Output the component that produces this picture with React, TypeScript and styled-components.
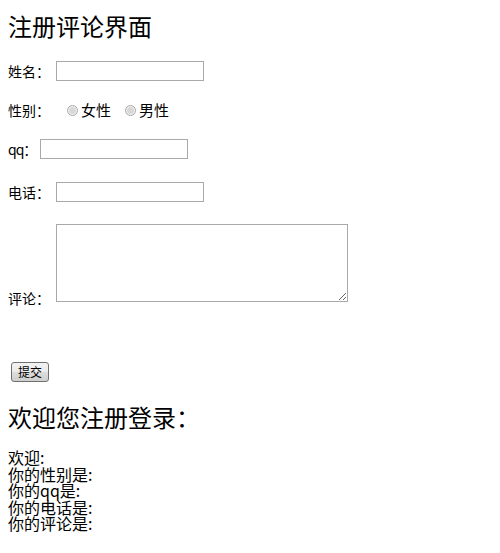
import React from "react";
import styled, { createGlobalStyle } from "styled-components";

const Global = createGlobalStyle`
  html, body { margin: 0; padding: 0; background: #fff; }
  body { font-family: "Noto Sans CJK SC", "Liberation Sans", sans-serif; color: #000; }
`;

const Page = styled.div`
  padding: 0 8px;
`;

const Heading = styled.h2<{ $top: number }>`
  margin: ${(p) => p.$top}px 0 0;
  font-size: 24px;
  line-height: 28px;
  font-weight: 400;
  letter-spacing: 0;
`;

const Form = styled.form`
  display: flex;
  flex-direction: column;
  margin: 0;
`;

const Row = styled.div<{ $top: number; $bottom?: boolean }>`
  display: flex;
  align-items: ${(p) => (p.$bottom ? "flex-end" : "center")};
  gap: 6px;
  margin-top: ${(p) => p.$top}px;
  min-height: 20px;
`;

const Label = styled.label<{ $drop?: number; $narrow?: boolean }>`
  font-size: 14px;
  line-height: 16px;
  white-space: nowrap;
  letter-spacing: ${(p) => (p.$narrow ? "-1px" : "0")};
  margin-bottom: ${(p) => -(p.$drop ?? 0)}px;
`;

const TextInput = styled.input<{ $shift?: number }>`
  box-sizing: border-box;
  width: 148px;
  height: 20px;
  margin: 0 0 0 ${(p) => p.$shift ?? 0}px;
  padding: 1px 2px;
  border: 1px solid #a9a9a9;
  background: #fff;
  font-size: 13px;
  outline: none;
`;

const Radios = styled.div`
  display: flex;
  align-items: center;
  margin-left: 11px;
`;

const RadioItem = styled.label`
  display: flex;
  align-items: center;
  font-size: 15px;
  line-height: 16px;
  margin-right: 14px;
`;

const Radio = styled.input`
  appearance: none;
  box-sizing: border-box;
  width: 11px;
  height: 11px;
  margin: 0 3px 0 0;
  border-radius: 50%;
  border: 1px solid #a8a8a8;
  background: radial-gradient(circle at 50% 50%, #d8d8d8 0 3px, #f2f2f2 4px);
`;

const Comment = styled.textarea`
  box-sizing: border-box;
  width: 292px;
  height: 78px;
  margin: 0;
  border: 1px solid #a9a9a9;
  font-size: 13px;
  outline: none;
`;

const Submit = styled.button`
  box-sizing: border-box;
  width: 38px;
  height: 20px;
  margin-left: 3px;
  padding: 0;
  border: 1px solid #707070;
  border-radius: 3px;
  background: linear-gradient(#f2f2f2, #ebebeb 50%, #dddddd 51%, #cfcfcf);
  font-family: "Noto Sans CJK SC", sans-serif;
  font-size: 12px;
  line-height: 16px;
  color: #000;
`;

const Output = styled.div`
  margin-top: 18px;
  font-size: 16px;
  line-height: 16.5px;
`;

const Line = styled.div`
  height: 16.5px;
`;

export default function App() {
  return (
    <>
      <Global />
      <Page>
        <Heading $top={12}>注册评论界面</Heading>
        <Form onSubmit={(e) => e.preventDefault()}>
          <Row $top={21}>
            <Label>姓名：</Label>
            <TextInput type="text" />
          </Row>
          <Row $top={19}>
            <Label>性别：</Label>
            <Radios>
              <RadioItem>
                <Radio type="radio" name="sex" />
                女性
              </RadioItem>
              <RadioItem>
                <Radio type="radio" name="sex" />
                男性
              </RadioItem>
            </Radios>
          </Row>
          <Row $top={19}>
            <Label $narrow>qq：</Label>
            <TextInput type="text" $shift={-2} />
          </Row>
          <Row $top={23}>
            <Label>电话：</Label>
            <TextInput type="text" />
          </Row>
          <Row $top={22} $bottom>
            <Label $drop={4}>评论：</Label>
            <Comment />
          </Row>
          <Row $top={60}>
            <Submit type="submit">提交</Submit>
          </Row>
        </Form>
        <Heading $top={21}>欢迎您注册登录：</Heading>
        <Output>
          <Line>欢迎:</Line>
          <Line>你的性别是:</Line>
          <Line>你的qq是:</Line>
          <Line>你的电话是:</Line>
          <Line>你的评论是:</Line>
        </Output>
      </Page>
    </>
  );
}
